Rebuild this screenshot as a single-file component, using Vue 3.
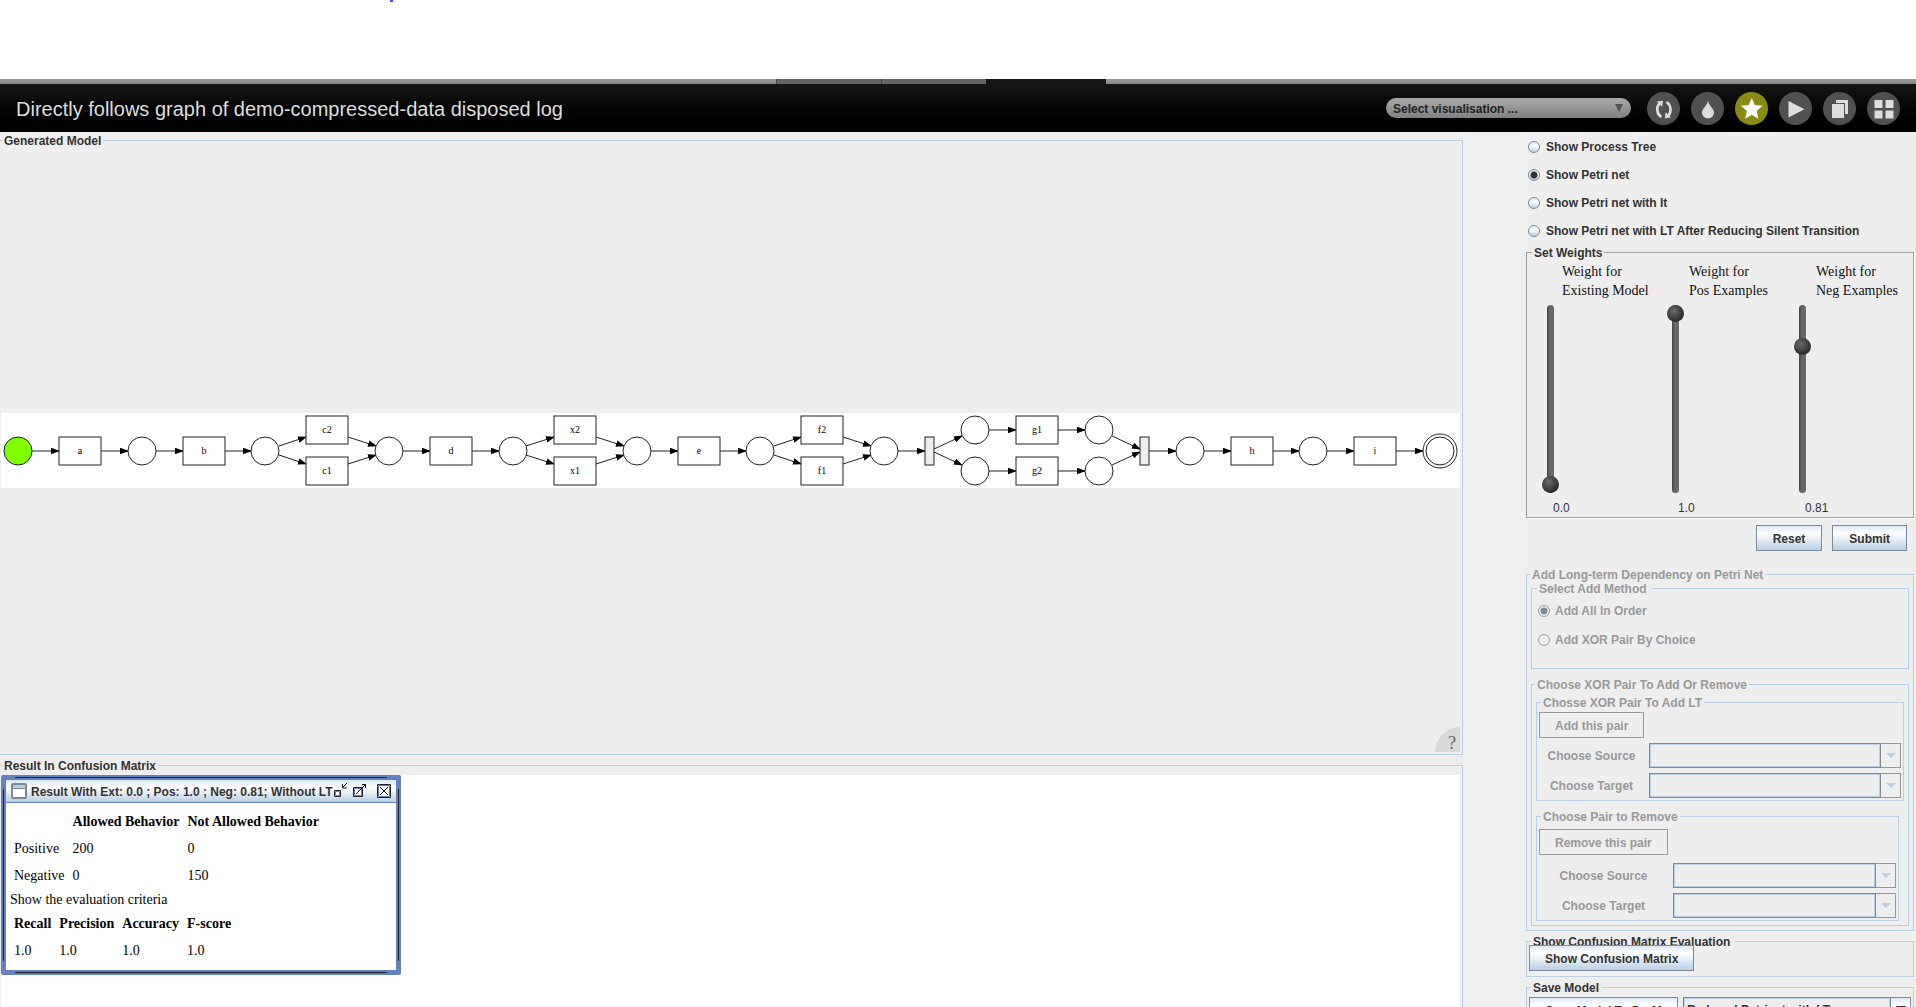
<script setup>
import { ref } from 'vue'

const views = [
  'Show Process Tree',
  'Show Petri net',
  'Show Petri net with lt',
  'Show Petri net with LT After Reducing Silent Transition',
]
const view = ref(views[1])

const weights = ref([
  { id: 'ext', name: 'Existing Model', value: 0, text: '0.0' },
  { id: 'pos', name: 'Pos Examples', value: 1, text: '1.0' },
  { id: 'neg', name: 'Neg Examples', value: 0.81, text: '0.81' },
])

const methods = ['Add All In Order', 'Add XOR Pair By Choice']
const method = ref(methods[0])

// Petri net, in units of the drawing's own canvas
const TOP = 17
const MID = 38
const LOW = 58
const places = [
  [17, MID], [141, MID], [264, MID], [388, MID], [512, MID], [636, MID], [759, MID], [883, MID],
  [974, TOP], [974, LOW], [1098, TOP], [1098, LOW], [1189, MID], [1312, MID], [1439, MID],
]
const transitions = [
  ['a', 79, MID], ['b', 203, MID], ['c2', 326, TOP], ['c1', 326, LOW], ['d', 450, MID],
  ['x2', 574, TOP], ['x1', 574, LOW], ['e', 698, MID], ['f2', 821, TOP], ['f1', 821, LOW],
  ['g1', 1036, TOP], ['g2', 1036, LOW], ['h', 1251, MID], ['i', 1374, MID],
]
const silent = [928, 1143]
const arcs = [
  [31, MID, 58, MID], [100, MID, 127, MID], [155, MID, 182, MID], [224, MID, 250, MID],
  [278, 33, 305, 24], [278, 42, 305, 51], [347, 24, 375, 33], [347, 51, 375, 42],
  [402, MID, 429, MID], [471, MID, 498, MID],
  [525, 33, 553, 24], [525, 42, 553, 51], [595, 24, 623, 33], [595, 51, 623, 42],
  [650, MID, 677, MID], [719, MID, 745, MID],
  [773, 33, 800, 24], [773, 42, 800, 51], [842, 24, 870, 33], [842, 51, 870, 42],
  [897, MID, 924, MID], [933, 36, 961, 23], [933, 39, 961, 52],
  [988, TOP, 1015, TOP], [988, LOW, 1015, LOW], [1057, TOP, 1084, TOP], [1057, LOW, 1084, LOW],
  [1111, 23, 1139, 36], [1111, 52, 1139, 39],
  [1148, MID, 1175, MID], [1203, MID, 1230, MID], [1272, MID, 1298, MID],
  [1326, MID, 1353, MID], [1395, MID, 1422, MID],
]
</script>

<template>
  <div class="app">
    <div class="page-top"><span class="mark"></span></div>
    <nav class="tabs"><span class="tab"></span><span class="tab"></span><span class="tab current"></span></nav>

    <header class="header">
      <h1>Directly follows graph of demo-compressed-data disposed log</h1>
      <div class="visual">
        <select aria-label="Visualisation"><option>Select visualisation ...</option></select>
        <i></i>
      </div>
      <div class="tools">
        <button class="tool" aria-label="Refresh">
          <svg viewBox="0 0 33 33"><path d="M14.200 25C9.500 21.500 9 15 12.500 11.500M19.600 10c4.700 3.500 5.200 10 1.700 13.500" fill="none" stroke="#ddd" stroke-width="2.600" /><path d="M9.800 9.500l6.200-.8-.8 6zM24 25.500l-6.200.8.8-6z" fill="#ddd" /></svg>
        </button>
        <button class="tool" aria-label="Export">
          <svg viewBox="0 0 33 33"><path d="M17 9c1 5 6 7.500 6 11.500a6 6 0 0 1-12 0c0-4 5-6.500 6-11.500z" fill="#ddd" /></svg>
        </button>
        <button class="tool active" aria-label="Favourite">
          <svg viewBox="0 0 33 33"><path d="M16.800 6l3 7 7.700.7-5.800 5.200 1.700 7.900-6.600-4-6.600 4 1.700-7.900L6 13.700l7.700-.7z" fill="#fff" /></svg>
        </button>
        <button class="tool" aria-label="Run">
          <svg viewBox="0 0 33 33"><path d="M9.500 9v16.500L25.500 17.300z" fill="#ddd" /></svg>
        </button>
        <button class="tool" aria-label="Copy">
          <svg viewBox="0 0 33 33"><path d="M13 8h12v14h-3V11h-9z" fill="#ddd" /><path d="M9 12h12v14H9z" fill="#ddd" /></svg>
        </button>
        <button class="tool" aria-label="Overview">
          <svg viewBox="0 0 33 33"><path d="M7.500 8h8v8h-8zM18.500 8h8v8h-8zM7.500 18.500h8v8h-8zM18.500 18.500h8v8h-8z" fill="#ddd" /></svg>
        </button>
      </div>
    </header>

    <main class="main">
      <div class="left">
        <fieldset class="box model">
          <legend>Generated Model</legend>
          <div class="model-view">
            <svg class="net" viewBox="0 0 1459 75">
              <defs>
                <marker id="head" markerWidth="9" markerHeight="7" refX="8" refY="3.500" orient="auto" markerUnits="userSpaceOnUse"><path d="M0 .2L9 3.500L0 6.800z" /></marker>
              </defs>
              <line v-for="(a, i) in arcs" :key="i" :x1="a[0]" :y1="a[1]" :x2="a[2]" :y2="a[3]" stroke="#222" marker-end="url(#head)" />
              <circle v-for="(p, i) in places" :key="i" :cx="p[0]" :cy="p[1]" r="14" :fill="i === 0 ? '#80ff00' : '#fff'" stroke="#222" />
              <circle cx="1439" :cy="MID" r="17" fill="none" stroke="#222" />
              <g v-for="t in transitions" :key="t[0]">
                <rect :x="t[1] - 21" :y="t[2] - 14" width="42" height="28" fill="#fff" stroke="#222" />
                <text :x="t[1]" :y="t[2] + 3" text-anchor="middle">{{ t[0] }}</text>
              </g>
              <rect v-for="x in silent" :key="x" :x="x - 4" :y="MID - 14" width="9" height="28" fill="#eee" stroke="#222" />
            </svg>
            <button class="help" aria-label="Help">?</button>
          </div>
        </fieldset>

        <fieldset class="box result">
          <legend>Result In Confusion Matrix</legend>
          <div class="desktop">
            <section class="window">
              <div class="titlebar">
                <svg class="win-icon" viewBox="0 0 16 16"><rect x="1" y="1" width="14" height="14" rx="1" fill="#fff" stroke="#7a8a99" stroke-width="2" /><path d="M2 2h12v3H2z" fill="#b8cfe5" /><path d="M2 5.500h12" stroke="#7a8a99" /></svg>
                <h2>Result With Ext: 0.0 ; Pos: 1.0 ; Neg: 0.81; Without LT</h2>
                <button class="win-button" aria-label="Iconify"><svg viewBox="0 0 16 16"><path d="M2.500 7.500h6v6h-6z" fill="#fff" stroke="#223" /><path d="M3.500 8.500h4v4h-4z" fill="none" stroke="#6382bf" /><path d="M15 0l-4.500 4.500M10.500 1v4H14.500" fill="none" stroke="#111" /></svg></button>
                <button class="win-button" aria-label="Maximize"><svg viewBox="0 0 16 16"><path d="M1.500 4.500h9v9h-9z" fill="#fff" stroke="#223" /><path d="M2.500 5.500h7v7h-7z" fill="none" stroke="#6382bf" /><path d="M4 11L13.500 1.500M10 1.500h3.500V5" fill="none" stroke="#111" /></svg></button>
                <button class="win-button close" aria-label="Close"><svg viewBox="0 0 16 16"><path d="M1.500 1.500h13v13h-13z" fill="#fff" stroke="#223" /><path d="M2.500 2.500h11v11h-11z" fill="none" stroke="#6382bf" /><path d="M4 4l8 8M12 4l-8 8" stroke="#111" /></svg></button>
              </div>
              <div class="window-body">
                <table>
                  <thead><tr><th></th><th>Allowed Behavior</th><th>Not Allowed Behavior</th></tr></thead>
                  <tbody>
                    <tr><td>Positive</td><td>200</td><td>0</td></tr>
                    <tr><td>Negative</td><td>0</td><td>150</td></tr>
                  </tbody>
                </table>
                <p>Show the evaluation criteria</p>
                <table>
                  <thead><tr><th>Recall</th><th>Precision</th><th>Accuracy</th><th>F-score</th></tr></thead>
                  <tbody><tr><td>1.0</td><td>1.0</td><td>1.0</td><td>1.0</td></tr></tbody>
                </table>
              </div>
            </section>
          </div>
        </fieldset>
      </div>

      <aside class="side">
        <div class="views">
          <label v-for="v in views" :key="v" class="radio"><input v-model="view" type="radio" name="view" :value="v" />{{ v }}</label>
        </div>

        <fieldset class="box weights">
          <legend>Set Weights</legend>
          <div class="weight-row">
            <div v-for="w in weights" :key="w.id" class="weight">
              <label :for="w.id">Weight for<br />{{ w.name }}</label>
              <input :id="w.id" v-model.number="w.value" type="range" min="0" max="1" step="0.01" />
              <output :for="w.id">{{ w.text }}</output>
            </div>
          </div>
        </fieldset>
        <div class="actions">
          <button class="btn">Reset</button>
          <button class="btn">Submit</button>
        </div>

        <fieldset class="box dependency" disabled>
          <legend>Add Long-term Dependency on Petri Net</legend>
          <fieldset class="box method">
            <legend class="wide">Select Add Method</legend>
            <label v-for="m in methods" :key="m" class="radio"><input v-model="method" type="radio" name="method" :value="m" />{{ m }}</label>
          </fieldset>
          <fieldset class="box pairs">
            <legend>Choose XOR Pair To Add Or Remove</legend>
            <fieldset class="box add">
              <legend>Chosse XOR Pair To Add LT</legend>
              <button class="btn">Add this pair</button>
              <div class="field"><label for="add-source">Choose Source</label><span class="combo"><select id="add-source"></select><i></i></span></div>
              <div class="field"><label for="add-target">Choose Target</label><span class="combo"><select id="add-target"></select><i></i></span></div>
            </fieldset>
            <fieldset class="box remove">
              <legend>Choose Pair to Remove</legend>
              <button class="btn">Remove this pair</button>
              <div class="field"><label for="remove-source">Choose Source</label><span class="combo"><select id="remove-source"></select><i></i></span></div>
              <div class="field"><label for="remove-target">Choose Target</label><span class="combo"><select id="remove-target"></select><i></i></span></div>
            </fieldset>
          </fieldset>
        </fieldset>

        <fieldset class="box evaluation">
          <legend class="wide">Show Confusion Matrix Evaluation</legend>
          <button class="btn">Show Confusion Matrix</button>
        </fieldset>

        <fieldset class="box save">
          <legend>Save Model</legend>
          <div class="save-row">
            <button class="btn">Save Model To ProM</button>
            <span class="combo"><select aria-label="Model to save"><option>Reduced Petrinet with LT</option></select><i></i></span>
          </div>
        </fieldset>
      </aside>
    </main>
  </div>
</template>

<style>
body {
  margin: 0;
}
</style>

<style scoped>
.app {
  display: flex;
  flex-direction: column;
  height: 100vh;
  overflow: hidden;
  background: #efefef;
  color: #333;
  font: bold 12px/14px "Liberation Sans", Arial, sans-serif;
}
.app * {
  box-sizing: border-box;
}
button,
select {
  margin: 0;
  padding: 0;
  border: 0;
  color: inherit;
  font: inherit;
}

.page-top {
  flex: none;
  height: 79px;
  background: #fff;
}
.mark {
  display: block;
  width: 3px;
  height: 2px;
  margin-left: 390px;
  background: #44f;
}
.tabs {
  display: flex;
  flex: none;
  height: 5px;
  padding-left: 776px;
  background: linear-gradient(#999, #888);
}
.tab {
  width: 105px;
  border-left: 1px solid #444;
  background: #646464;
}
.tab.current {
  width: 120px;
  border: 0;
  background: #151515;
}
.header {
  display: flex;
  flex: none;
  align-items: center;
  height: 48px;
  padding: 0 16px;
  background: linear-gradient(#151515, #000 70%);
}
h1 {
  flex: 1;
  margin: 0;
  padding-top: 2px;
  color: #ddd;
  font-size: 20px;
  font-weight: normal;
  line-height: 24px;
}
.visual {
  display: grid;
  grid-template-columns: 1fr 24px;
  align-items: center;
  width: 245px;
  height: 20px;
  border-radius: 10px;
  background: linear-gradient(#aaa, #808080);
  color: #222;
}
.visual select {
  height: 20px;
  padding: 1px 0 0 7px;
  appearance: none;
  background: none;
}
.visual i {
  width: 0;
  margin-left: 8px;
  border: solid transparent;
  border-width: 8px 4px 0;
  border-top-color: #555;
}
.tools {
  display: flex;
  gap: 11px;
  margin-left: 16px;
}
.tool {
  width: 33px;
  height: 33px;
  border-radius: 50%;
  background: #505050;
}
.tool.active {
  background: #8b8b12;
}
.tool svg {
  display: block;
}

.main {
  display: flex;
  flex: 1;
  min-height: 0;
}
.left {
  display: flex;
  flex: 1;
  flex-direction: column;
  min-width: 0;
  padding-top: 1px;
  background: #eee;
}
.side {
  flex: none;
  width: 392px;
  margin-left: 61px;
  padding: 0 2px;
  background: #eee;
}

.box {
  min-width: 0;
  margin: 0;
  padding: 0;
  border: 1px solid #b8cfe5;
}
legend {
  margin-left: 2px;
  padding: 2px 2px 0;
  line-height: 12px;
}
.wide {
  padding-right: 5px;
}
.left .box {
  border-left: 0;
}
.model {
  flex: 1;
}
.model-view {
  display: flex;
  position: relative;
  align-items: center;
  height: 100%;
  padding: 0 2px 0 1px;
}
.net {
  width: 100%;
  background: #fff;
  font: 10px "Liberation Serif", serif;
}
.help {
  position: absolute;
  right: 2px;
  bottom: 2px;
  width: 25px;
  height: 25px;
  padding: 6px 0 0 9px;
  border-radius: 25px 0 0 0;
  background: #d9d9d9;
  color: #666;
  font: 18px/18px "Liberation Serif", serif;
}
.result {
  flex: none;
  height: 249px;
  margin-top: 3px;
  border-bottom: 0;
}
.desktop {
  min-height: 232px;
  margin: 3px 2px 0 1px;
  background: #fff;
}
.window {
  position: relative;
  width: 400px;
  border: 5px solid #6382bf;
  border-radius: 2px;
  color: #000;
  font: 14px/19px "Liberation Serif", "Times New Roman", serif;
}
.window::before {
  content: "";
  position: absolute;
  inset: -3px 9px;
  border: solid #222;
  border-width: 1px 0;
  pointer-events: none;
}
.window::after {
  content: "";
  position: absolute;
  inset: 9px -3px;
  border: solid #222;
  border-width: 0 1px;
  pointer-events: none;
}
.titlebar {
  display: flex;
  align-items: center;
  height: 23px;
  padding: 0 4px 0 5px;
  border-bottom: 1px solid #6382bf;
  background: linear-gradient(#dde8f3, #fff 35%, #b8cfe5);
}
.win-icon {
  flex: none;
  width: 16px;
  height: 16px;
}
h2 {
  flex: 1;
  min-width: 0;
  margin: 0 0 0 4px;
  padding-top: 1px;
  color: #333;
  font: bold 12px/14px "Liberation Sans", Arial, sans-serif;
  white-space: nowrap;
}
.win-button {
  flex: none;
  width: 16px;
  height: 16px;
  margin-left: 4px;
  background: none;
}
.win-button:first-of-type {
  margin-left: 0;
}
.win-button.close {
  margin-left: 8px;
}
.win-button svg {
  display: block;
}
.window-body {
  padding: 5px 4px 6px;
  background: #fff;
}
table {
  border-collapse: collapse;
}
th,
td {
  height: 27px;
  padding: 0 4px;
  text-align: left;
}
p {
  margin: 0;
  line-height: 21px;
}

.radio {
  display: flex;
  align-items: center;
  height: 28px;
  gap: 6px;
}
.radio input {
  width: 12px;
  height: 12px;
  margin: 0;
  border: 1px solid #7a8a99;
  border-radius: 50%;
  appearance: none;
  background: linear-gradient(#dde8f3, #fff 40%, #b8cfe5);
}
.radio input:checked {
  background: radial-gradient(circle, #333 3px, transparent 4px), linear-gradient(#dde8f3, #fff 40%, #b8cfe5);
}
.radio input:disabled {
  border-color: #999;
  background: none;
}
.radio input:disabled:checked {
  background: radial-gradient(circle, #7a8a99 3px, transparent 4px);
}
.views {
  padding: 1px 2px 0;
}

.weights {
  height: 273px;
  border-color: #a0a0a0;
  box-shadow: 1px 1px 0 #fff;
}
.weights legend {
  margin-left: 5px;
}
.weight-row {
  display: grid;
  grid-template-columns: 125px 127px 1fr;
  padding: 3px 0 0 15px;
}
.weight {
  display: flex;
  flex-direction: column;
  align-items: flex-start;
}
.weight label {
  margin-left: 20px;
  color: #111;
  font: 14px/19px "Liberation Serif", serif;
  white-space: nowrap;
}
.weight + .weight label {
  margin-left: 22px;
}
.weight input {
  width: 17px;
  height: 188px;
  margin: 5px 0 0;
  appearance: none;
  writing-mode: vertical-lr;
  direction: rtl;
  background: none;
}
.weight input::-webkit-slider-runnable-track {
  width: 7px;
  height: 100%;
  border-radius: 4px;
  background: linear-gradient(to right, #444, #686868 40%);
}
.weight input::-webkit-slider-thumb {
  width: 17px;
  height: 17px;
  margin-left: -5px;
  border-radius: 50%;
  appearance: none;
  background: radial-gradient(circle at 40% 35%, #6a6a6a, #222 80%);
}
.weight output {
  margin: 8px 0 0 11px;
  font-weight: normal;
}
.btn {
  height: 26px;
  padding: 1px 15px 0;
  border: 1px solid #7a8a99;
  background: linear-gradient(#dde8f3, #fff 30%, #b8cfe5);
  white-space: nowrap;
}
.btn:disabled {
  border-color: #999;
  background: none;
  color: #999;
}
.actions {
  display: flex;
  justify-content: flex-end;
  gap: 10px;
  padding: 7px 7px 16px 0;
}
.actions .btn {
  padding: 1px 16px 0;
}

.dependency {
  padding: 0 4px 4px;
  color: #999;
}
.dependency > legend,
.method legend,
.pairs > legend {
  margin-left: -1px;
}
.method {
  padding: 1px 6px 14px;
}
.method .radio {
  height: 29px;
  gap: 5px;
}
.pairs {
  margin-top: 8px;
  padding: 4px 4px 4px;
}
.add {
  padding: 3px 2px 2px;
}
.remove {
  margin: 8px 5px 0 0;
  padding: 6px 2px 2px;
}
.remove .btn {
  margin-bottom: 3px;
}
.field {
  display: grid;
  grid-template-columns: 105px 1fr;
  gap: 5px;
  align-items: center;
  margin-top: 5px;
}
.remove .field {
  grid-template-columns: 129px 1fr;
}
.field label {
  text-align: center;
}
.combo {
  display: grid;
  grid-template-columns: 1fr 20px;
  height: 25px;
  min-width: 0;
}
.combo select {
  min-width: 0;
  padding: 0 3px;
  border: 1px solid #7a8a99;
  border-radius: 0;
  appearance: none;
  background: none;
  box-shadow: inset 0 0 0 1px #b8cfe5;
  opacity: 1;
}
.combo i {
  display: flex;
  align-items: center;
  justify-content: center;
  border: 1px solid #999;
  border-left: 0;
}
.combo i::before {
  content: "";
  border: solid transparent;
  border-width: 5px 5px 0;
  border-top-color: #b8cfe5;
}

.evaluation {
  margin-top: 3px;
  padding: 0 2px 5px;
}
.evaluation .btn {
  display: block;
  position: relative;
  margin-top: -3px;
}
.save {
  margin-top: 3px;
  padding: 3px 2px;
}
.save-row {
  display: grid;
  grid-template-columns: 149px 1fr;
  gap: 5px;
}
.save .combo i {
  border-color: #7a8a99;
  background: linear-gradient(#dde8f3, #fff 30%, #b8cfe5);
}
.save .combo i::before {
  border-width: 7px 5px 0;
  border-top-color: #333;
}
</style>
